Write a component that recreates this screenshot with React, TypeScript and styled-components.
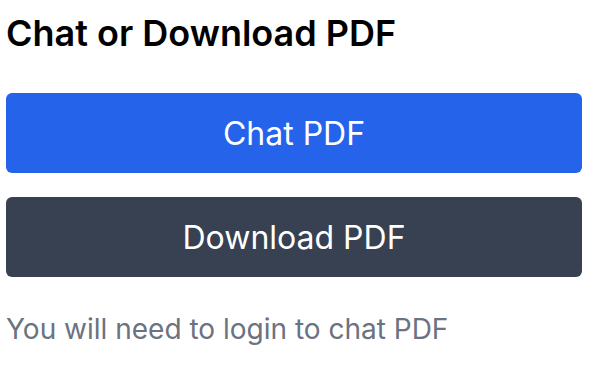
import React from 'react';
import { styled, createGlobalStyle } from 'styled-components';

const GlobalStyle = createGlobalStyle`
  body {
    margin: 0;
    background: #ffffff;
    font-family: Inter, "Noto Sans", sans-serif;
  }
`;

type Variant = 'primary' | 'dark';

const Panel = styled.div`
  display: flex;
  flex-direction: column;
  width: 576px;
  padding: 13px 0 0 6px;
`;

const Title = styled.h2`
  margin: 0 0 40px 0;
  font-size: 36px;
  line-height: 40px;
  font-weight: 600;
  color: #000000;
`;

const Actions = styled.div`
  display: flex;
  flex-direction: column;
  gap: 24px;
`;

const ActionButton = styled.button<{ $variant: Variant }>`
  height: 80px;
  border: none;
  border-radius: 6px;
  font-family: Inter, "Noto Sans", sans-serif;
  font-size: 32px;
  color: #ffffff;
  cursor: pointer;
  background-color: ${(props) => (props.$variant === 'primary' ? '#2563eb' : '#374151')};
`;

const Note = styled.p`
  margin: 34px 0 0 0;
  font-size: 28px;
  line-height: 36px;
  color: #6b7280;
`;

const App = () => {
  return (
    <>
      <GlobalStyle />
      <Panel>
        <Title>Chat or Download PDF</Title>
        <Actions>
          <ActionButton $variant="primary">Chat PDF</ActionButton>
          <ActionButton $variant="dark">Download PDF</ActionButton>
        </Actions>
        <Note>You will need to login to chat PDF</Note>
      </Panel>
    </>
  );
};

export default App;
